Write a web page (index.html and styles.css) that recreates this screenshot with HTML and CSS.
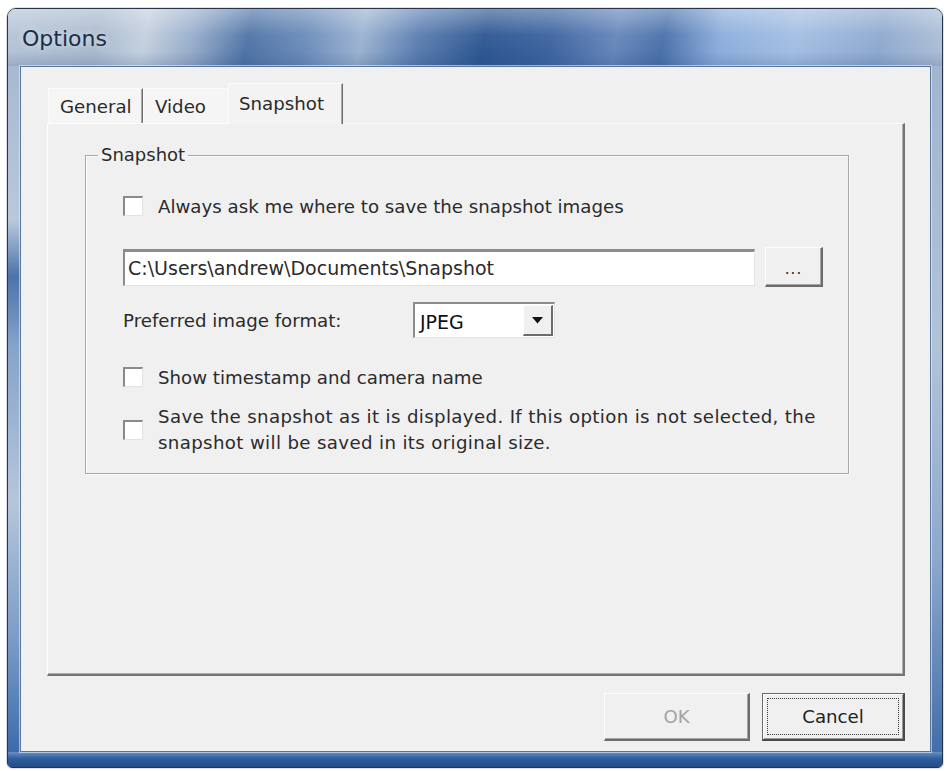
FILE: index.html
```html
<!DOCTYPE html>
<html lang="en">
<head>
<meta charset="utf-8">
<title>Options</title>
<link rel="stylesheet" href="styles.css">
</head>
<body>
<div class="window">
  <div class="titlebar"><span class="title">Options</span></div>
  <div class="frame">
    <div class="client">
      <div class="tabs">
        <div class="tab tab-general">General</div>
        <div class="tab tab-video">Video</div>
        <div class="tab tab-active">Snapshot</div>
      </div>
      <div class="panel">
        <fieldset class="group">
          <legend>Snapshot</legend>
          <div class="group-body">
            <div class="row row-ask"><span class="check"></span><span class="label">Always ask me where to save the snapshot images</span></div>
            <div class="row row-path">
              <div class="textbox">C:\Users\andrew\Documents\Snapshot</div>
              <div class="btn btn-browse">...</div>
            </div>
            <div class="row row-format">
              <span class="label fmt-label">Preferred image format:</span>
              <div class="combo">
                <span class="combo-value">JPEG</span>
                <span class="combo-arrow"><svg width="11" height="7" viewBox="0 0 11 7"><polygon points="0,0 11,0 5.5,6.5" fill="#111"/></svg></span>
              </div>
            </div>
            <div class="row row-ts"><span class="check"></span><span class="label">Show timestamp and camera name</span></div>
            <div class="row row-disp"><span class="check"></span><span class="label">Save the snapshot as it is displayed. If this option is not selected, the<br>snapshot will be saved in its original size.</span></div>
          </div>
        </fieldset>
      </div>
      <div class="buttons">
        <div class="btn btn-ok">OK</div>
        <div class="btn btn-cancel"><span class="focus">Cancel</span></div>
      </div>
    </div>
  </div>
</div>
</body>
</html>
```

FILE: styles.css
```css
* { box-sizing: border-box; }

html, body {
  margin: 0;
  padding: 0;
  background: #ffffff;
}

body {
  width: 948px;
  height: 771px;
  overflow: hidden;
  font-family: "DejaVu Sans", "Liberation Sans", sans-serif;
  font-size: 18.2px;
  color: #2b2b2b;
}

.window {
  margin: 8px 0 0 7px;
  width: 936px;
  height: 760px;
  border: 1px solid #27354a;
  border-radius: 9px 9px 5px 5px;
  overflow: hidden;
  display: flex;
  flex-direction: column;
  box-shadow: 0 0 0 1px rgba(120, 140, 170, 0.25);
}

.titlebar {
  flex: none;
  height: 57px;
  padding-left: 14px;
  display: flex;
  align-items: center;
  background:
    linear-gradient(to bottom, rgba(255,255,255,0.35), rgba(255,255,255,0.05) 45%, rgba(255,255,255,0) 75%, rgba(30,60,110,0.18)),
    linear-gradient(100deg, #b5c4d7 0%, #a9bacf 10%, #c3cfdd 15%, #98aecb 20%, #4f74a7 26%, #6a8bb9 32%, #9bb2d0 38%, #5b7eb1 44%, #2e5791 51%, #3d63a0 58%, #6586b9 65%, #4a71aa 70%, #8caddb 76%, #a3bee2 84%, #8ea9cf 93%, #aebfd6 100%);
}

.title {
  font-size: 22px;
  color: #1d2d48;
  text-shadow: 0 0 6px rgba(255,255,255,0.7);
  margin-top: 1px;
}

.frame {
  flex: 1;
  display: flex;
  padding: 0 11px 15px 12px;
  background:
    linear-gradient(to bottom, #6a90c4, #2f5d9d 45%, #244c86) left bottom / 100% 15px no-repeat,
    linear-gradient(to bottom, #a7b9d1, #b9c8db 22%, #4c73aa 30%, #86a3ca 40%, #b6c6da 62%, #7b9bc6 82%, #3565a5 100%) left top / 12px 100% no-repeat,
    linear-gradient(to bottom, #a1b5cf, #b2c3d8 40%, #8ea9cd 70%, #3d69a7 100%) right top / 11px 100% no-repeat,
    #8fa8c8;
}

.client {
  flex: 1;
  display: flex;
  flex-direction: column;
  background: #f0f0f0;
  border: 1px solid #58779f;
  box-shadow: 0 0 0 1px rgba(230, 238, 248, 0.6);
}

/* Tabs */
.tabs {
  display: flex;
  align-items: flex-end;
  height: 40px;
  margin: 16px 0 0 27px;
}

.tab {
  height: 35px;
  display: flex;
  align-items: center;
  background: #f5f5f5;
  border-top: 1px solid #fbfbfb;
  border-left: 1px solid #fbfbfb;
  white-space: nowrap;
}

.tab-general {
  width: 95px;
  padding-left: 11px;
  border-right: 1px solid #6e6e6e;
  box-shadow: inset -1px 0 0 #a8a8a8;
}

.tab-video {
  width: 85px;
  padding-left: 11px;
}

.tab-active {
  position: relative;
  z-index: 1;
  width: 115px;
  height: 41px;
  margin-bottom: -1px;
  padding-left: 10px;
  padding-bottom: 2px;
  background: #f3f3f3;
  border-right: 1px solid #6e6e6e;
  box-shadow: inset -1px 0 0 #a8a8a8;
}

/* Panel */
.panel {
  height: 553px;
  margin: 0 25px 0 26px;
  border-top: 1px solid #fcfcfc;
  border-left: 1px solid #fcfcfc;
  border-right: 2px solid #747474;
  border-bottom: 2px solid #747474;
  box-shadow: inset -1px -1px 0 #b0b0b0;
  padding-top: 21px;
}

.group {
  margin: 0 54px 0 37px;
  padding: 0;
  min-width: 0;
  border: 1px solid #a8a8a8;
  box-shadow: inset 1px 1px 0 #fbfbfb, 1px 1px 0 #fbfbfb;
}

.group legend {
  margin-left: 12px;
  padding: 0 3px;
  line-height: 20px;
  font-size: 18px;
}

.group-body {
  padding: 0 0 17px 37px;
}

.row {
  display: flex;
  align-items: center;
}

.check {
  flex: none;
  width: 20px;
  height: 20px;
  margin-right: 15px;
  background: #ffffff;
  border-top: 2px solid #8a8a8a;
  border-left: 2px solid #8a8a8a;
  border-right: 1px solid #e2e2e2;
  border-bottom: 1px solid #e2e2e2;
}

.row-ask {
  margin-top: 30px;
  height: 22px;
}

.row-path {
  margin-top: 30px;
  height: 40px;
}

.textbox {
  width: 632px;
  height: 37px;
  padding-left: 3px;
  display: flex;
  align-items: center;
  background: #ffffff;
  border-top: 3px solid #8c8c8c;
  border-left: 2px solid #8c8c8c;
  border-right: 1px solid #e4e4e4;
  border-bottom: 1px solid #e4e4e4;
  font-size: 19px;
  white-space: nowrap;
}

.btn {
  display: flex;
  align-items: center;
  justify-content: center;
  background: #f0f0f0;
  border-top: 1px solid #fdfdfd;
  border-left: 1px solid #fdfdfd;
  border-right: 2px solid #6c6c6c;
  border-bottom: 2px solid #6c6c6c;
  box-shadow: inset -1px -1px 0 #a6a6a6;
}

.btn-browse {
  width: 58px;
  height: 40px;
  margin-left: 10px;
  font-size: 15px;
  padding-top: 4px;
  letter-spacing: 1px;
}

.row-format {
  margin-top: 14px;
  height: 38px;
}

.fmt-label {
  width: 290px;
}

.combo {
  width: 142px;
  height: 36px;
  display: flex;
  align-items: center;
  background: #ffffff;
  border-top: 2px solid #8c8c8c;
  border-left: 2px solid #8c8c8c;
  border-right: 1px solid #e2e2e2;
  border-bottom: 1px solid #e2e2e2;
}

.combo-value {
  flex: 1;
  padding-left: 5px;
  padding-top: 3px;
  font-size: 19px;
  color: #111;
}

.combo-arrow {
  width: 30px;
  height: 31px;
  margin-right: 1px;
  display: flex;
  align-items: center;
  justify-content: center;
  background: #f0f0f0;
  border-top: 1px solid #fdfdfd;
  border-left: 1px solid #fdfdfd;
  border-right: 2px solid #6c6c6c;
  border-bottom: 2px solid #6c6c6c;
}

.row-ts {
  margin-top: 28px;
  height: 20px;
}

.row-disp {
  margin-top: 17px;
}

.row-disp .label {
  line-height: 26px;
  letter-spacing: 0.35px;
}

/* Bottom buttons */
.buttons {
  display: flex;
  justify-content: flex-end;
  gap: 12px;
  margin: 17px 25px 0 0;
}

.btn-ok {
  width: 146px;
  height: 48px;
  color: #a4a4a4;
}

.btn-cancel {
  width: 143px;
  height: 48px;
  padding: 4px;
  border-top: 1px solid #6a6a6a;
  border-left: 1px solid #6a6a6a;
  border-right: 2px solid #4a4a4a;
  border-bottom: 2px solid #4a4a4a;
  box-shadow: inset 1px 1px 0 #fdfdfd, inset -1px -1px 0 #9a9a9a;
  color: #222;
}

.focus {
  flex: 1;
  align-self: stretch;
  display: flex;
  align-items: center;
  justify-content: center;
  border: 1px dotted #3a3a3a;
}
```
